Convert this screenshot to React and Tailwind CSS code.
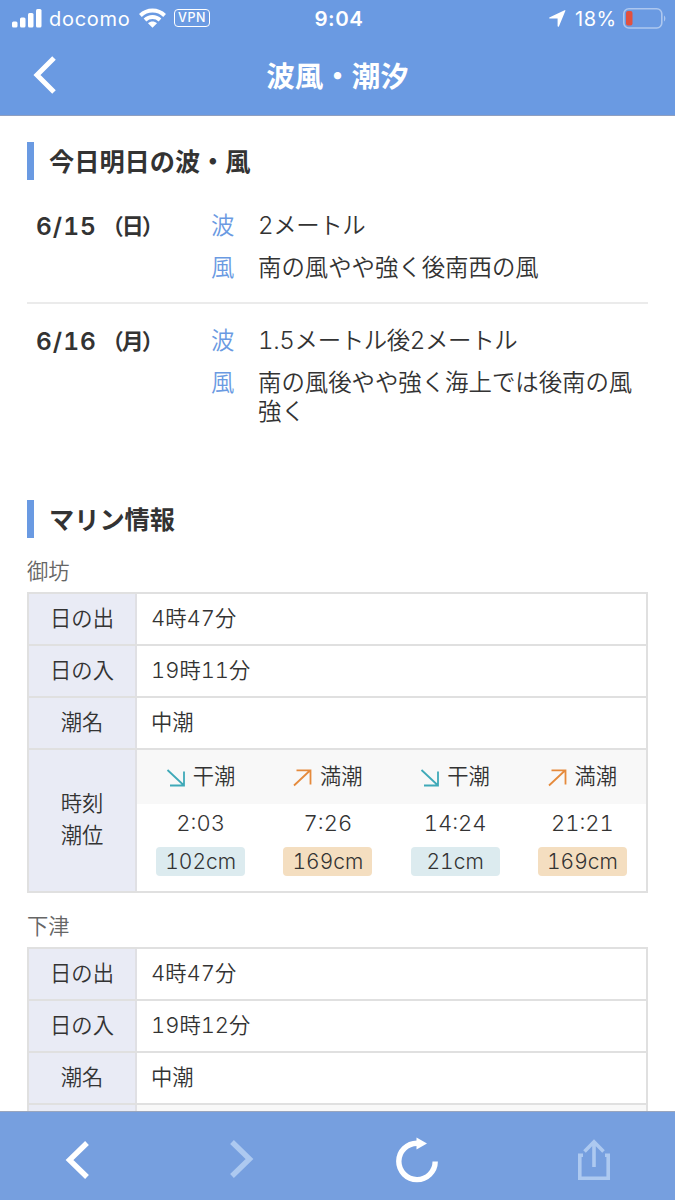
import clsx from "clsx";

const forecast = [
    { date: "6/15", day: "（日）", wave: "2メートル", wind: "南の風やや強く後南西の風" },
    { date: "6/16", day: "（月）", wave: "1.5メートル後2メートル", wind: "南の風後やや強く海上では後南の風強く" },
];

const ports = [
    {
        name: "御坊",
        sunrise: "4時47分",
        sunset: "19時11分",
        tideName: "中潮",
        tides: [
            { type: "low", time: "2:03", level: "102cm" },
            { type: "high", time: "7:26", level: "169cm" },
            { type: "low", time: "14:24", level: "21cm" },
            { type: "high", time: "21:21", level: "169cm" },
        ],
    },
    { name: "下津", sunrise: "4時47分", sunset: "19時12分", tideName: "中潮", tides: null },
];

// Latin digits use their own face next to the kana and kanji
function Mixed({ text }) {
    return text.split(/([0-9.]+)/).map((part, i) =>
        /[0-9]/.test(part) ? (
            <span key={i} className="font-['Inter'] text-[1.03em] leading-none tabular-nums">{part}</span>
        ) : (
            part
        )
    );
}

function StatusBar() {
    return (
        <div className="flex h-9 items-center pl-3 pr-[9px] font-['Inter'] text-[20px] text-white">
            <div className="flex flex-1 items-center">
                <svg width="30" height="19" viewBox="0 0 30 19" fill="currentColor">
                    <rect x="0" y="12.5" width="5.5" height="6" rx="1.5" />
                    <rect x="8" y="8.5" width="5.5" height="10" rx="1.5" />
                    <rect x="16" y="4" width="5.5" height="14.5" rx="1.5" />
                    <rect x="24" y="0" width="5.5" height="18.5" rx="1.5" />
                </svg>
                <span className="ml-[7px] w-[82px] pt-0.5 tracking-[0.7px]">docomo</span>
                <svg className="ml-[8px]" width="27" height="20" viewBox="0 0 27 20" fill="none" stroke="currentColor" strokeWidth="3.9">
                    <path d="M1.4 7.5C8.2 .9 18.8 .9 25.6 7.5" />
                    <path d="M6 12C10.2 8 16.8 8 21 12" />
                    <path d="M13.5 19.8L9 15.3C11.6 12.9 15.4 12.9 18 15.3Z" fill="currentColor" stroke="none" />
                </svg>
                <span className="ml-2 flex h-[18px] w-[36px] items-center justify-center rounded-[4px] border-[1.5px] border-white text-[12.5px] font-medium tracking-[0.5px]">
                    VPN
                </span>
            </div>
            <span className="pt-0.5 text-[20.5px] font-semibold tracking-[0.6px]">9:04</span>
            <div className="flex flex-1 items-center justify-end">
                <svg width="17" height="17" viewBox="0 0 17 17" fill="currentColor">
                    <path d="M16.4.7L10 16.2C9.6 17 8.6 16.8 8.6 16V8.6H1C0 8.6-.1 7.6.8 7.2L15.6.3C16.2.1 16.6.3 16.4.7Z" />
                </svg>
                <span className="ml-[9px] w-[43px] pt-0.5 tracking-[0.5px] whitespace-nowrap">18%</span>
                <svg className="ml-[5px]" width="43" height="21" viewBox="0 0 43 21" fill="none">
                    <rect x=".8" y=".8" width="38" height="19.2" rx="5" stroke="#fff" strokeOpacity=".45" strokeWidth="1.6" />
                    <rect x="3" y="3" width="6.5" height="14.5" rx="2" fill="#e2503f" />
                    <path d="M41 7.5c1.8.8 1.8 5.2 0 6z" fill="#fff" fillOpacity=".45" />
                </svg>
            </div>
        </div>
    );
}

function Header() {
    return (
        <header className="h-[116px] shrink-0 border-b border-[#8f9fc0] bg-[#6a9ae2]">
            <StatusBar />
            <div className="grid h-[78px] grid-cols-[80px_1fr_80px] items-center">
                <svg className="ml-[33px]" width="25" height="38" viewBox="0 0 25 38" fill="none" stroke="#fff" strokeWidth="5">
                    <path d="M21 2L4 19L21 36" />
                </svg>
                <h1 className="text-center text-[28.5px] font-bold text-white">波風・潮汐</h1>
            </div>
        </header>
    );
}

function SectionTitle({ children }) {
    return (
        <h2 className="flex h-[38px] items-center border-l-[7px] border-[#6a9ae2] pl-[15px] text-[25.2px] font-bold">
            {children}
        </h2>
    );
}

function ForecastRow({ date, day, wave, wind }) {
    return (
        <div className="flex">
            <div className="flex w-[184px] items-center self-start pl-[9px] leading-[29px] font-bold whitespace-nowrap">
                <span className="pt-px font-['Inter'] text-[24.5px] font-semibold tracking-[1px] tabular-nums">{date}</span>
                <span className="ml-[5px] pb-0.5 text-[22px] tracking-[-2px]">{day}</span>
            </div>
            <dl className="grid flex-1 grid-cols-[47px_1fr] gap-y-[13px] text-[23.4px] leading-[29px]">
                <dt className="text-[#6a9ae2]">波</dt>
                <dd className="tracking-[-0.35px]"><Mixed text={wave} /></dd>
                <dt className="text-[#6a9ae2]">風</dt>
                <dd>{wind}</dd>
            </dl>
        </div>
    );
}

function TideArrow({ type }) {
    return (
        <svg
            className={clsx("mt-1", type === "low" ? "text-[#3fa9b8]" : "text-[#e58a3c]")}
            width="19"
            height="18"
            viewBox="0 0 19 18"
            fill="none"
            stroke="currentColor"
            strokeWidth="1.8"
        >
            {type === "low" ? <path d="M1.5 1L17.5 16M18 2.5V16.5H4" /> : <path d="M1 16.5L17 1.5M3.5 1.3H17.5V15.5" />}
        </svg>
    );
}

function TideColumn({ type, time, level }) {
    return (
        <div className="flex flex-col items-center">
            <div className="flex h-[54px] w-full items-center justify-center gap-[8px] bg-[#f8f8f8] pb-0.5">
                <TideArrow type={type} />
                <span className="pb-0.5">{type === "low" ? "干潮" : "満潮"}</span>
            </div>
            <div className="flex h-[43px] items-center pb-[5px] font-['Inter'] text-[22px] tabular-nums">{time}</div>
            <div
                className={clsx(
                    "flex h-[29px] w-[89px] items-center justify-center rounded-[4px] font-['Inter'] text-[21px] tabular-nums",
                    type === "low" ? "bg-[#dcebef]" : "bg-[#f4dec0]"
                )}
            >
                {level}
            </div>
        </div>
    );
}

function InfoRow({ label, children }) {
    return (
        <div className="flex h-[52px] border-b-2 border-[#e0e0e0]">
            <div className="flex w-[108px] items-center justify-center border-r-2 border-[#e0e0e4] bg-[#e9ebf5] pb-[5px]">
                {label}
            </div>
            <div className="flex items-center pb-[5px] pl-[14px]">
                <span><Mixed text={children} /></span>
            </div>
        </div>
    );
}

function PortTable({ port }) {
    return (
        <section>
            <h3 className="h-[41px] text-[21.3px] leading-[38px] text-[#666]">{port.name}</h3>
            <div className="border-2 border-[#e0e0e0] text-[21.3px]">
                <InfoRow label="日の出">{port.sunrise}</InfoRow>
                <InfoRow label="日の入">{port.sunset}</InfoRow>
                <InfoRow label="潮名">{port.tideName}</InfoRow>
                <div className="flex h-[141px]">
                    <div className="flex w-[108px] flex-col items-center justify-center border-r-2 border-[#e0e0e4] bg-[#e9ebf5] pb-1.5 leading-8">
                        {port.tides && (
                            <>
                                <span>時刻</span>
                                <span>潮位</span>
                            </>
                        )}
                    </div>
                    {port.tides ? (
                        <div className="grid flex-1 grid-cols-4">
                            {port.tides.map((tide) => (
                                <TideColumn key={tide.time} {...tide} />
                            ))}
                        </div>
                    ) : (
                        <div className="h-[54px] flex-1 bg-[#f8f8f8]" />
                    )}
                </div>
            </div>
        </section>
    );
}

function Toolbar() {
    return (
        <nav className="flex h-[89px] shrink-0 items-center border-t border-[#9aa6bd] bg-[#769fdf] pl-[63px] text-white">
            <svg className="mt-2" width="28" height="40" viewBox="0 0 28 40" fill="none" stroke="currentColor" strokeWidth="5.4">
                <path d="M24 3L6.5 20L24 37" />
            </svg>
            <svg className="mt-1.5 ml-[137px] text-[#adc9f0]" width="28" height="40" viewBox="0 0 28 40" fill="none" stroke="currentColor" strokeWidth="5.4">
                <path d="M4 3L21.5 20L4 37" />
            </svg>
            <svg className="mt-2 ml-[139px]" width="44" height="46" viewBox="0 0 44 46" fill="none">
                <path d="M40.2 24.5A18.2 18.2 0 1 1 22 6.2" stroke="currentColor" strokeWidth="5.4" />
                <path d="M21.5 .5L32 6.5L21.5 12.5Z" fill="currentColor" />
            </svg>
            <svg className="mt-2 ml-[138px] text-[#adc9f0]" width="34" height="42" viewBox="0 0 34 42" fill="none" stroke="currentColor" strokeWidth="3.6">
                <path d="M6 16.3H2.8V39.2H31.2V16.3H28" />
                <path d="M17 28V4M7.5 12.5L17 2.8L26.5 12.5" />
            </svg>
        </nav>
    );
}

export default function App() {
    return (
        <div className="flex h-[1200px] w-[675px] flex-col overflow-hidden bg-white font-['Noto_Sans_CJK_JP',sans-serif] text-[#333]">
            <Header />
            <main className="min-h-0 flex-1 overflow-hidden px-[27px] pt-[26px]">
                <SectionTitle>今日明日の波・風</SectionTitle>
                <div className="pt-[30px] font-[350]">
                    <ForecastRow {...forecast[0]} />
                    <div className="mt-[21px] mb-[21px] h-[2px] bg-[#ebebeb]" />
                    <ForecastRow {...forecast[1]} />
                </div>
                <div className="mt-[75px]">
                    <SectionTitle>マリン情報</SectionTitle>
                </div>
                <div className="flex flex-col gap-[13px] pt-[13px] font-[350]">
                    {ports.map((port) => (
                        <PortTable key={port.name} port={port} />
                    ))}
                </div>
            </main>
            <Toolbar />
        </div>
    );
}
